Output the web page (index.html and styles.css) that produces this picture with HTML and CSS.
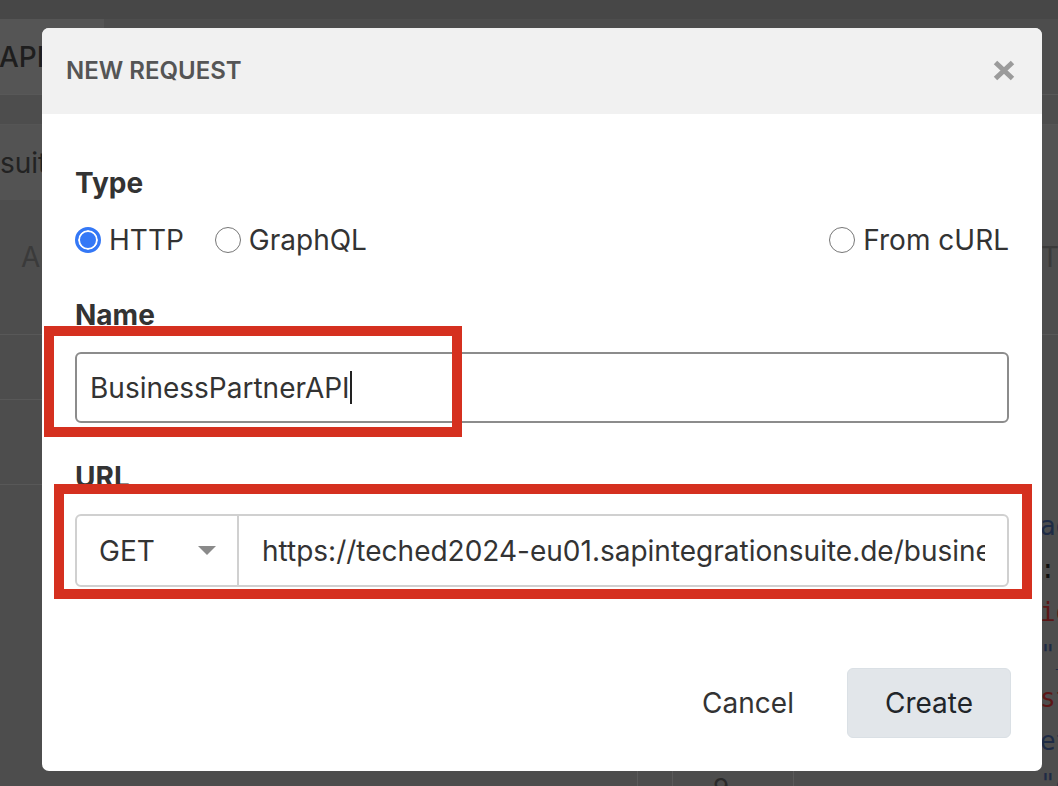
FILE: index.html
```html
<!DOCTYPE html>
<html lang="en">
<head>
<meta charset="utf-8">
<title>New Request</title>
<link rel="stylesheet" href="styles.css">
</head>
<body>
<div class="app">
  <div class="app-top"></div>
  <div class="app-tabs"><div class="app-tab">API</div></div>
  <div class="app-spacer"></div>
  <div class="app-url">suite.de/business</div>
  <div class="app-panes">
    <div class="pane-left">
      <div class="pl-tabs"><span>Auth</span></div>
      <div class="pl-row1"></div>
      <div class="pl-row2"></div>
    </div>
    <div class="pane-right">
      <div class="pr-tabs"><span>Timeline</span></div>
      <div class="pr-body">
        <div class="pr-col1"></div>
        <div class="pr-col2"><div class="pr-num">9</div></div>
        <div class="pr-col3">
<pre class="pr-code"><span class="k">ad</span>
<span class="p">: {</span>
<span class="s">id</span>
<span class="k">"_</span>
<span class="s">st</span>
<span class="k">et</span>
<span class="k">"etag</span></pre>
        </div>
      </div>
    </div>
  </div>
</div>

<div class="modal">
  <div class="modal-head">
    <div class="modal-title">NEW REQUEST</div>
    <div class="modal-close">
      <svg width="22" height="21" viewBox="0 0 22 21"><path d="M2.5 2.5 L19.5 18.5 M19.5 2.5 L2.5 18.5" stroke="#9b9b9b" stroke-width="5" fill="none"/></svg>
    </div>
  </div>
  <div class="modal-body">
    <div class="field-label">Type</div>
    <div class="radios">
      <div class="radio"><span class="dot on"></span><span>HTTP</span></div>
      <div class="radio"><span class="dot"></span><span>GraphQL</span></div>
      <div class="radio right"><span class="dot"></span><span>From cURL</span></div>
    </div>
    <div class="field-label name-label">Name</div>
    <div class="text-input"><span>BusinessPartnerAPI</span><span class="caret"></span></div>
    <div class="field-label url-label">URL</div>
    <div class="url-group">
      <div class="method"><span>GET</span><svg width="18" height="9" viewBox="0 0 18 9"><polygon points="0,0 18,0 9,9" fill="#8a8a8a"/></svg></div>
      <div class="url-text">https://teched2024-eu01.sapintegrationsuite.de/businesspartner/v1/A_BusinessPartner</div>
    </div>
    <div class="footer">
      <button class="btn btn-cancel">Cancel</button>
      <button class="btn btn-create">Create</button>
    </div>
  </div>
</div>

<div class="mark mark-name"></div>
<div class="mark mark-url"></div>
</body>
</html>
```

FILE: styles.css
```css
* { box-sizing: border-box; }

body {
  margin: 0;
  width: 1058px;
  height: 786px;
  overflow: hidden;
  position: relative;
  background: #4d4d4d;
  font-family: Inter, "Noto Sans", sans-serif;
}

/* dimmed application behind the dialog */
.app {
  height: 786px;
  display: flex;
  flex-direction: column;
}
.app-top { height: 19px; flex: none; background: #474747; }
.app-tabs {
  height: 76px;
  flex: none;
  display: flex;
  border-bottom: 1px solid #585858;
}
.app-tab {
  width: 104px;
  background: #555555;
  display: flex;
  align-items: center;
  font-size: 28px;
  font-weight: 500;
  color: #1e1e1e;
  text-indent: -1px;
}
.app-spacer { height: 30px; flex: none; border-bottom: 1px solid #555555; }
.app-url {
  height: 75px;
  flex: none;
  background: #535353;
  display: flex;
  align-items: center;
  font-size: 28px;
  color: #222;
  white-space: nowrap;
  overflow: hidden;
}
.app-panes {
  flex: 1;
  display: grid;
  grid-template-columns: 637px 1fr;
  min-height: 0;
}
.pl-tabs, .pr-tabs {
  height: 135px;
  border-bottom: 1px solid #585858;
  padding-top: 40px;
  font-size: 28px;
  line-height: 34px;
  color: #3a3a3a;
  white-space: nowrap;
  overflow: hidden;
}
.pl-tabs { padding-left: 21px; }
.pr-tabs { padding-left: 404px; }
.pl-row1 { height: 65px; border-bottom: 1px solid #585858; }
.pl-row2 { height: 85px; border-bottom: 1px solid #585858; }

.pr-body {
  display: grid;
  grid-template-columns: 35px 121px 1fr;
  height: 451px;
}
.pr-col1 { border-left: 1px solid #5a5a5a; }
.pr-col2 { border-left: 1px solid #5a5a5a; }
.pr-col3 { border-left: 1px solid #5a5a5a; overflow: hidden; }
.pr-num {
  margin-top: 436px;
  text-align: center;
  padding-right: 24px;
  font-size: 26px;
  line-height: 34px;
  color: #2a2a2a;
}
.pr-code {
  margin: 0;
  padding: 170px 0 0 246px;
  font-family: "DejaVu Sans Mono", "Liberation Mono", monospace;
  font-size: 26px;
  line-height: 43px;
  white-space: pre;
}
.pr-code .k { color: #1e2b45; }
.pr-code .p { color: #111; }
.pr-code .s { color: #5b1616; }

/* dialog */
.modal {
  position: absolute;
  left: 42px;
  top: 28px;
  width: 1000px;
  background: #ffffff;
  border-radius: 7px;
  overflow: hidden;
}
.modal-head {
  height: 86px;
  background: #f1f1f1;
  display: flex;
  align-items: center;
  justify-content: space-between;
  padding: 0 27px 2px 24px;
}
.modal-title {
  font-size: 24px;
  font-weight: 600;
  color: #555555;
}
.modal-close { display: flex; }

.modal-body { padding: 52px 33px 33px; }

.field-label {
  font-size: 28px;
  font-weight: 700;
  line-height: 34px;
  color: #333333;
}
.name-label { margin-top: 41px; }
.url-label { margin-top: 37px; }

.radios {
  margin-top: 23px;
  display: flex;
  align-items: center;
  height: 34px;
}
.radio {
  display: flex;
  align-items: center;
  gap: 8px;
  font-size: 28px;
  line-height: 34px;
  color: #333333;
}
.radio + .radio { margin-left: 31px; }
.radio.right { margin-left: auto; }
.dot {
  width: 26px;
  height: 26px;
  border-radius: 50%;
  border: 1.5px solid #767676;
  background: #fff;
}
.dot.on {
  border: 3px solid #3478f6;
  background: #3478f6;
  box-shadow: inset 0 0 0 2px #ffffff;
}

.text-input {
  margin-top: 20px;
  height: 71px;
  border: 2px solid #8c8c8c;
  border-radius: 6px;
  padding: 0 13px;
  display: flex;
  align-items: center;
  font-size: 28px;
  color: #333333;
}
.caret {
  width: 2px;
  height: 33px;
  background: #222;
  margin-left: 0;
}

.url-group {
  margin-top: 20px;
  height: 73px;
  border: 2px solid #d0d0d0;
  border-radius: 6px;
  display: flex;
  align-items: stretch;
  font-size: 28px;
  color: #333333;
}
.method {
  width: 162px;
  flex: none;
  border-right: 2px solid #d0d0d0;
  display: flex;
  align-items: center;
  justify-content: space-between;
  padding: 0 21px 0 22px;
}
.url-text {
  flex: 1;
  min-width: 0;
  overflow: hidden;
  white-space: nowrap;
  margin: 0 22px 0 23px;
  display: flex;
  align-items: center;
}

.footer {
  margin-top: 81px;
  margin-right: -2px;
  display: flex;
  justify-content: flex-end;
  gap: 15px;
}
.btn {
  height: 70px;
  padding: 0 37px;
  font-family: inherit;
  font-size: 28px;
  border-radius: 6px;
  border: 1px solid transparent;
  background: none;
  color: #333333;
}
.btn-create {
  background: #e2e6ea;
  border-color: #dae0e5;
  color: #212529;
}

/* red annotation boxes */
.mark {
  position: absolute;
  border: 10px solid #d5301f;
}
.mark-name { left: 44px; top: 326px; width: 418px; height: 111px; }
.mark-url { left: 54px; top: 484px; width: 978px; height: 115px; }
```
